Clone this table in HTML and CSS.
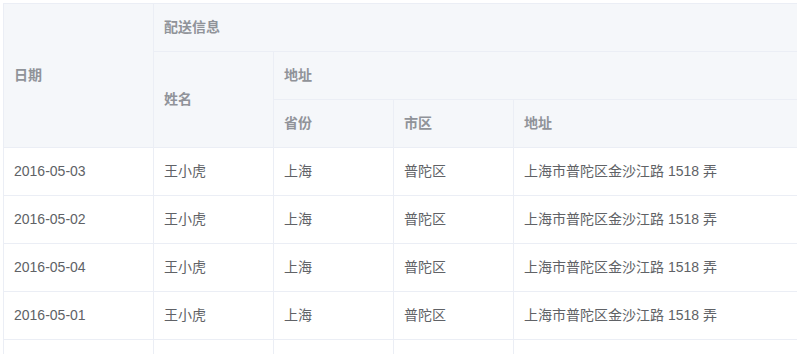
FILE: index.html
```html
<!DOCTYPE html>
<html lang="zh-CN">
<head>
<meta charset="utf-8">
<title>Table</title>
<link rel="stylesheet" href="styles.css">
</head>
<body>
<div class="wrap">
<table class="table">
  <colgroup>
    <col class="c-date">
    <col class="c-name">
    <col class="c-prov">
    <col class="c-city">
    <col class="c-addr">
  </colgroup>
  <thead>
    <tr>
      <th rowspan="3"><div class="cell">日期</div></th>
      <th colspan="4"><div class="cell">配送信息</div></th>
    </tr>
    <tr>
      <th rowspan="2"><div class="cell">姓名</div></th>
      <th colspan="3"><div class="cell">地址</div></th>
    </tr>
    <tr>
      <th><div class="cell">省份</div></th>
      <th><div class="cell">市区</div></th>
      <th><div class="cell">地址</div></th>
    </tr>
  </thead>
  <tbody>
    <tr><td><div class="cell">2016-05-03</div></td><td><div class="cell">王小虎</div></td><td><div class="cell">上海</div></td><td><div class="cell">普陀区</div></td><td><div class="cell">上海市普陀区金沙江路 1518 弄</div></td></tr>
    <tr><td><div class="cell">2016-05-02</div></td><td><div class="cell">王小虎</div></td><td><div class="cell">上海</div></td><td><div class="cell">普陀区</div></td><td><div class="cell">上海市普陀区金沙江路 1518 弄</div></td></tr>
    <tr><td><div class="cell">2016-05-04</div></td><td><div class="cell">王小虎</div></td><td><div class="cell">上海</div></td><td><div class="cell">普陀区</div></td><td><div class="cell">上海市普陀区金沙江路 1518 弄</div></td></tr>
    <tr><td><div class="cell">2016-05-01</div></td><td><div class="cell">王小虎</div></td><td><div class="cell">上海</div></td><td><div class="cell">普陀区</div></td><td><div class="cell">上海市普陀区金沙江路 1518 弄</div></td></tr>
    <tr class="empty"><td><div class="cell"></div></td><td><div class="cell"></div></td><td><div class="cell"></div></td><td><div class="cell"></div></td><td><div class="cell"></div></td></tr>
  </tbody>
</table>
</div>
</body>
</html>
```
FILE: styles.css
```css
html, body {
  margin: 0;
  padding: 0;
  background: #fff;
  overflow: hidden;
}
.wrap {
  padding: 3px 0 0 3px;
}
.table {
  width: 796px;
  table-layout: fixed;
  border-collapse: separate;
  border-spacing: 0;
  border-top: 1px solid #ebeef5;
  border-left: 1px solid #ebeef5;
  font-family: "Liberation Sans", "Noto Sans CJK SC", sans-serif;
  font-size: 14px;
  color: #606266;
}
.c-date { width: 150px; }
.c-name { width: 120px; }
.c-prov { width: 120px; }
.c-city { width: 120px; }
.table th,
.table td {
  padding: 12px 0;
  border-right: 1px solid #ebeef5;
  border-bottom: 1px solid #ebeef5;
  text-align: left;
  vertical-align: middle;
}
.table th {
  background: #f5f7fa;
  color: #909399;
  font-weight: bold;
}
.cell {
  padding: 0 10px;
  line-height: 23px;
  min-height: 23px;
  white-space: nowrap;
  overflow: hidden;
}
```
